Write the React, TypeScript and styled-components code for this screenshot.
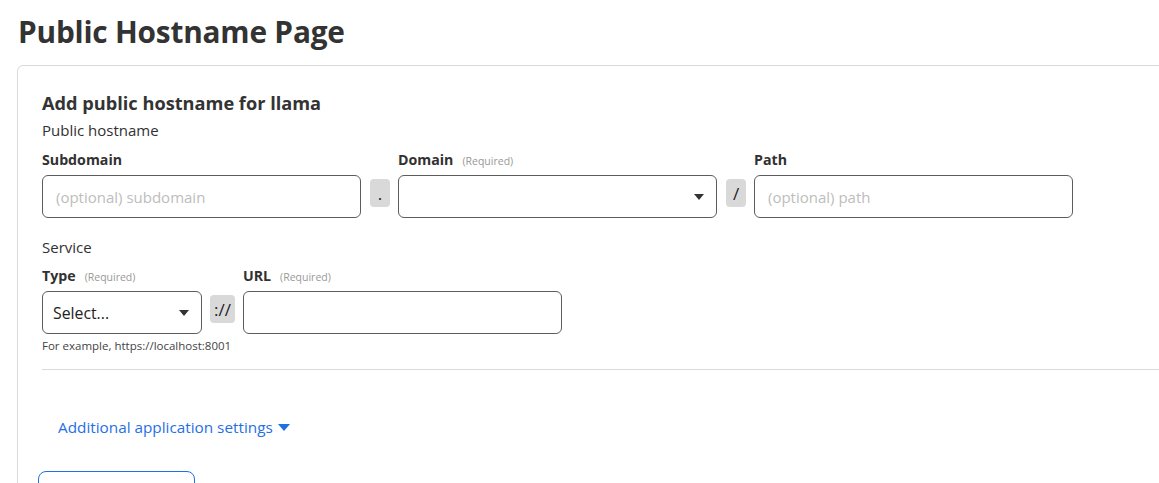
import React from "react";
import styled, { createGlobalStyle } from "styled-components";

const Global = createGlobalStyle`
  html, body { margin: 0; padding: 0; background: #fff; overflow: hidden; }
  body { font-family: "Open Sans", "Noto Sans", sans-serif; color: #313131; }
  * { box-sizing: border-box; }
`;

const Page = styled.div`
  padding: 12px 0 0 17px;
  width: 1300px;
`;

const Title = styled.h1`
  margin: 0 0 13px 1px;
  font-size: 29.8px;
  line-height: 40px;
  font-weight: 700;
  color: #333;
  letter-spacing: -0.2px;
`;

const Card = styled.section`
  width: 1250px;
  border: 1px solid #d9d9d9;
  border-radius: 6px;
  padding: 25px 24px 40px 24px;
`;

const CardHeading = styled.h2`
  margin: 0 0 5px 0;
  font-size: 18.2px;
  line-height: 24px;
  font-weight: 700;
  color: #333;
`;

const SectionLabel = styled.div<{ $mt?: number }>`
  margin-top: ${(p) => p.$mt ?? 0}px;
  font-size: 15px;
  line-height: 20px;
  color: #313131;
`;

const FieldGrid = styled.div<{ $cols: string; $mt: number }>`
  display: grid;
  grid-template-columns: ${(p) => p.$cols};
  grid-template-rows: 20px 43px;
  grid-auto-rows: auto;
  column-gap: 8px;
  row-gap: 5px;
  margin-top: ${(p) => p.$mt}px;
  align-items: start;
`;

const Label = styled.label<{ $col: number }>`
  grid-row: 1;
  grid-column: ${(p) => p.$col};
  display: flex;
  align-items: baseline;
  gap: 9px;
  font-size: 14.2px;
  line-height: 20px;
  font-weight: 700;
  color: #313131;
  white-space: nowrap;
`;

const Required = styled.span`
  font-size: 10.5px;
  font-weight: 400;
  color: #999;
`;

const Control = styled.div<{ $col: number; $w: number }>`
  grid-row: 2;
  grid-column: ${(p) => p.$col};
  width: ${(p) => p.$w}px;
  height: 43px;
  border: 1px solid #5c5c5c;
  border-radius: 6px;
  display: flex;
  align-items: center;
  padding: 0 12px 0 13px;
  font-size: 15px;
  color: #222;
`;

const Placeholder = styled.span`
  color: #bdbdbd;
  font-size: 15px;
  flex: 1;
`;

const Value = styled.span`
  flex: 1;
  font-size: 15.8px;
  color: #222;
  margin-left: -3px;
`;

const Caret = styled.span`
  width: 0;
  height: 0;
  border-left: 5px solid transparent;
  border-right: 5px solid transparent;
  border-top: 6px solid #333;
`;

const Sep = styled.div<{ $col: number; $w: number }>`
  grid-row: 2;
  grid-column: ${(p) => p.$col};
  width: ${(p) => p.$w}px;
  height: 28px;
  margin-top: 4px;
  background: #d9d9d9;
  border-radius: 4px;
  display: flex;
  align-items: center;
  justify-content: center;
  font-size: 17px;
  color: #222;
`;

const Help = styled.div<{ $col: number }>`
  grid-row: 3;
  grid-column: ${(p) => p.$col};
  font-size: 11.5px;
  line-height: 16px;
  margin-top: -1px;
  color: #444;
  white-space: nowrap;
`;

const Divider = styled.hr`
  border: 0;
  border-top: 1px solid #dadada;
  margin: 15px 0 0 0;
`;

const LinkButton = styled.button`
  margin: 45px 0 0 0;
  padding: 0 16px;
  border: 0;
  background: none;
  font-family: inherit;
  font-size: 15.3px;
  line-height: 24px;
  color: #1f6fe5;
  display: flex;
  align-items: center;
  gap: 5px;
  cursor: pointer;
`;

const BlueCaret = styled.span`
  width: 0;
  height: 0;
  border-left: 6px solid transparent;
  border-right: 6px solid transparent;
  border-top: 7px solid #1f6fe5;
`;

const OutlineButton = styled.button`
  margin: 32px 0 0 -4px;
  width: 157px;
  height: 40px;
  border: 1px solid #1f6fe5;
  border-radius: 8px;
  background: #fff;
`;

export default function App() {
  return (
    <>
      <Global />
      <Page>
        <Title>Public Hostname Page</Title>
        <Card>
          <CardHeading>Add public hostname for llama</CardHeading>
          <SectionLabel>Public hostname</SectionLabel>
          <FieldGrid $cols="320px 20px 320px 20px 319px" $mt={10}>
            <Label $col={1}>Subdomain</Label>
            <Control $col={1} $w={319}>
              <Placeholder>(optional) subdomain</Placeholder>
            </Control>
            <Sep $col={2} $w={20}>.</Sep>
            <Label $col={3}>
              Domain <Required>(Required)</Required>
            </Label>
            <Control $col={3} $w={319}>
              <Value />
              <Caret />
            </Control>
            <Sep $col={4} $w={20}>/</Sep>
            <Label $col={5}>Path</Label>
            <Control $col={5} $w={319}>
              <Placeholder>(optional) path</Placeholder>
            </Control>
          </FieldGrid>
          <SectionLabel $mt={19}>Service</SectionLabel>
          <FieldGrid $cols="160px 25px 319px" $mt={9}>
            <Label $col={1}>
              Type <Required>(Required)</Required>
            </Label>
            <Control $col={1} $w={160}>
              <Value>Select...</Value>
              <Caret />
            </Control>
            <Sep $col={2} $w={25}>://</Sep>
            <Label $col={3}>
              URL <Required>(Required)</Required>
            </Label>
            <Control $col={3} $w={319} />
            <Help $col={1}>For example, https://localhost:8001</Help>
          </FieldGrid>
          <Divider />
          <LinkButton>
            Additional application settings <BlueCaret />
          </LinkButton>
          <OutlineButton />
        </Card>
      </Page>
    </>
  );
}
